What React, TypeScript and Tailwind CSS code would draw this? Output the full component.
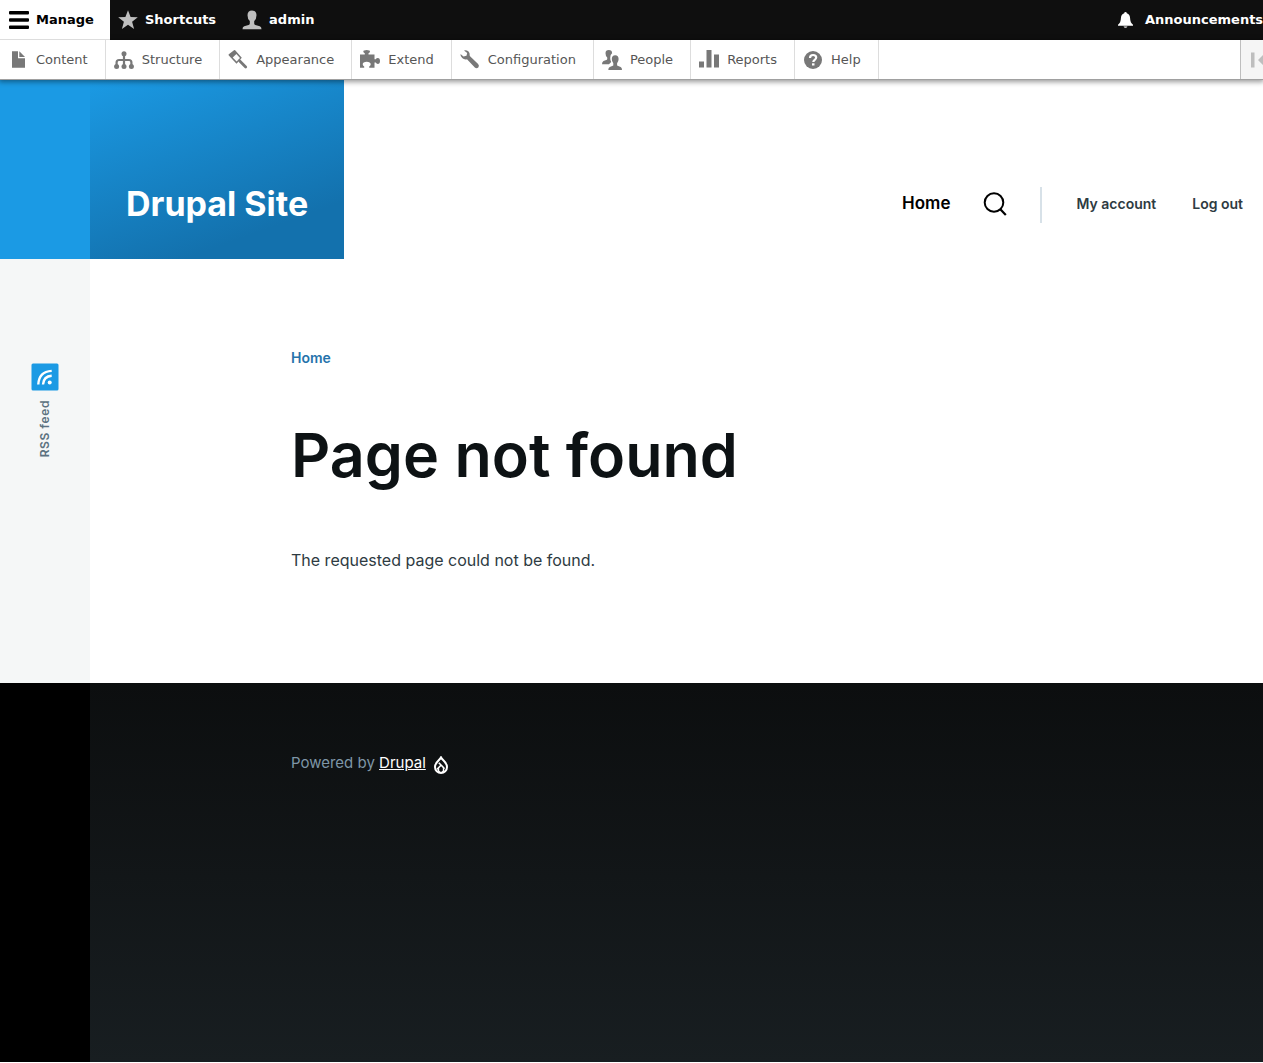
import type { ReactNode } from 'react';

function Icon({ children, className = 'text-[#787878]' }: { children: ReactNode; className?: string }) {
  return (
    <svg viewBox="0 0 20 20" className={`size-5 shrink-0 overflow-visible ${className}`} fill="currentColor" aria-hidden="true">
      {children}
    </svg>
  );
}

const menu = [
  {
    label: 'Content',
    icon: <path d="M4 1.300h6v7h7v9.500H4zM11.300 1.300l5.700 5.600h-5.700z" />,
  },
  {
    label: 'Structure',
    icon: (
      <>
        <circle cx="10" cy="3.800" r="2.500" />
        <circle cx="2.600" cy="16.500" r="2.500" />
        <circle cx="10" cy="16.500" r="2.500" />
        <circle cx="17.400" cy="16.500" r="2.500" />
        <path d="M10 5v11M2.600 16v-3.500q0-2.500 2.500-2.500h9.800q2.500 0 2.500 2.500V16" fill="none" stroke="currentColor" strokeWidth="2.200" />
      </>
    ),
  },
  {
    label: 'Appearance',
    icon: (
      <>
        <path
          fillRule="evenodd"
          d="M6 0.300q.8-.5 1.400.2l6.400 7.200-5.300 6L.800 5.600q-.6-.8 0-1.300zM8.400 4.100L4.700 7.400l3.900 4.200 3.400-3.700z"
        />
        <path d="M11.500 10.800l6.200 6.200" stroke="currentColor" strokeWidth="2.800" strokeLinecap="round" />
      </>
    ),
  },
  {
    label: 'Extend',
    icon: (
      <path d="M0 4.500h4.800V3.200Q3.300 2.800 3.300 1.500 3.300 0 6.700 0T10 1.500q0 1.300-1.500 1.700v1.300h6v4.700h1.300q.5-1.300 2-1.300 2.200 0 2.200 3t-2.200 3q-1.500 0-2-1.300h-1.300v5.100H9.200v-1.300q1.500-.7 1.500-2.200c0-1.400-1.500-2.500-4-2.500s-4 1.100-4 2.500q0 1.500 1.500 2.200v1.300H0z" />
    ),
  },
  {
    label: 'Configuration',
    icon: (
      <path d="M4 .4Q6.200-.3 8.300 1.300q2 1.800 1.500 4.700l8.300 8q1.600 1.800.2 3.500-1.700 1.500-3.500 0L7 9.300Q4.200 10 2.200 8.100.200 6.300.500 4l3 2.600 3-.8.700-2.800z" />
    ),
  },
  {
    label: 'People',
    icon: (
      <>
        <path d="M3.500 3.300Q3.500 0 6.800 0t3.300 3.300q-1.900 1.300-1.900 4.600 0 2.500 1 4L7 14.300H0q0-2.500 1.500-3.200L4.900 9.700q.6-.4.300-2.300-1.700-1.400-1.700-4.100z" />
        <path d="M9.800 9q0-3.800 3.400-3.800T16.600 9q0 2.500-1.500 4.300v2.200l3.500 1.400Q20 17.500 20 20H6.300q0-2.500 1.500-3.100l3.500-1.400v-2.200Q9.800 11.500 9.800 9z" />
      </>
    ),
  },
  {
    label: 'Reports',
    icon: <path d="M0 11.500h5v6H0zM7.500 0h5v17.500h-5zM15 4.500h5v13h-5z" />,
  },
  {
    label: 'Help',
    icon: (
      <>
        <circle cx="10" cy="10" r="9" />
        <path d="M7 8q0-3 3.100-3t3.100 2.600c0 2.200-2.900 2.300-2.900 4.400" fill="none" stroke="white" strokeWidth="2.200" />
        <path d="M9 13.300h2.500v2.200H9z" fill="white" />
      </>
    ),
  },
];

export default function App() {
  return (
    <div className="overflow-x-hidden bg-white font-['Inter',sans-serif] text-[#0d1214]">
      <div className="relative z-10 font-['DejaVu_Sans',sans-serif] text-[13px] leading-5">
        <nav aria-label="Administration" className="flex h-10 bg-[#0f0f0f] font-bold text-white">
          <button type="button" className="flex h-10 w-[110px] shrink-0 items-center gap-[7px] border-b border-[#ddd] bg-white pl-[9px] text-black">
            <Icon className="text-black">
              <path d="M1 1h18q1 0 1 1v1.500q0 1-1 1H1q-1 0-1-1V2q0-1 1-1zM1 8.300h18q1 0 1 1v1.500q0 1-1 1H1q-1 0-1-1V9.300q0-1 1-1zM1 15.600h18q1 0 1 1v1.500q0 1-1 1H1q-1 0-1-1v-1.500q0-1 1-1z" />
            </Icon>
            Manage
          </button>
          <a href="#shortcuts" className="flex items-center gap-[7px] pr-[18px] pl-2">
            <Icon className="text-[#bebebe]">
              <path d="M10 .2l2.600 6.700 7.200.3-5.700 4.500 2 7.200L10 14.800l-6.100 4.100 2-7.200L.2 7.200l7.200-.3z" />
            </Icon>
            Shortcuts
          </a>
          <a href="#admin" className="flex items-center gap-[7px] px-2">
            <Icon className="text-[#bebebe]">
              <path d="M5.500 5.300Q5.500.600 10 .600t4.500 4.700q0 3.700-2.300 5.700v2.500q0 1.100 1.200 1.500l4.400 1.300q1.700.6 1.700 2.900H.500q0-2.300 1.700-2.900L6.600 15q1.200-.4 1.200-1.500V11Q5.500 9 5.500 5.300z" />
            </Icon>
            admin
          </a>
          <a href="#announcements" className="ml-auto flex w-[147px] shrink-0 items-center gap-[9px] whitespace-nowrap">
            <Icon className="text-white">
              <path d="M9.500 2q1.200 0 1.300 1.300 3.200 1 3.300 5 .1 4.500 2.900 6.500v1H2v-1q2.800-2 2.900-6.500.1-4 3.300-5Q8.300 2 9.500 2zM7.500 16.500h4q-.6 1.300-2 1.300t-2-1.300z" />
            </Icon>
            Announcements
          </a>
        </nav>
        <div className="flex h-10 border-b border-[#a0a0a0] bg-white text-[#565656] shadow-[0_1px_5px_1px_rgba(0,0,0,0.4)]">
          <ul className="flex">
            {menu.map(({ label, icon }) => (
              <li key={label} className="border-r border-[#ddd]">
                <a href={`#${label.toLowerCase()}`} className="flex h-full items-center gap-2 pr-[17px] pl-2">
                  <Icon>{icon}</Icon>
                  {label}
                </a>
              </li>
            ))}
          </ul>
          <button type="button" aria-label="Vertical orientation" className="ml-auto flex w-[23px] items-center overflow-hidden border-l border-[#bebebe] bg-[#f5f5f5] pl-[10px]">
            <Icon className="text-[#bebebe]">
              <path d="M0 2.500h3.500v15H0zM7 10l6-6v12z" />
            </Icon>
          </button>
        </div>
      </div>

      <div className="flex">
        <aside className="flex w-[90px] shrink-0 flex-col bg-[#f5f7f7]">
          <div className="h-[179px] bg-[#1b9ae4]" />
          <a href="#rss" className="mt-[104px] flex flex-col items-center gap-[9px] text-xs font-semibold text-[#5c7280]">
            <svg viewBox="0 0 28 28" className="size-7" aria-hidden="true">
              <rect width="27" height="27" x=".5" y=".5" rx="1.500" fill="#1b9ae4" />
              <g fill="none" stroke="white" strokeWidth="2.400">
                <path d="M7.300 21.500q.6-12.800 13.400-13.600M12 21.500q.5-8.300 8.700-8.800" />
              </g>
              <circle cx="18.700" cy="19.600" r="2" fill="white" />
            </svg>
            <span className="rotate-180 tracking-wider [writing-mode:vertical-rl]">RSS feed</span>
          </a>
        </aside>
        <div className="min-w-0 flex-1">
          <header className="flex h-[179px] items-end justify-between">
            <a
              href="#home"
              className="flex h-full items-end bg-[linear-gradient(160deg,#1b9ae4_0%,#1371ad_78.66%)] px-9 pb-[35px] text-[34px] leading-10 font-bold whitespace-nowrap text-white"
            >
              Drupal Site
            </a>
            <nav aria-label="Main" className="mb-9 flex h-9 items-center pr-5 whitespace-nowrap">
              <a href="#home" className="pb-0.5 text-[17px] font-semibold text-black">Home</a>
              <button type="button" aria-label="Search" className="ml-[33px] pb-0.5">
                <svg viewBox="0 0 24 24" className="size-6" fill="none" stroke="black" strokeWidth="2" aria-hidden="true">
                  <circle cx="11" cy="10.500" r="9.300" />
                  <path d="M17.300 17.200l5.500 5.800" strokeWidth="2.200" />
                </svg>
              </button>
              <div className="ml-[33px] flex h-9 items-center gap-9 border-l-2 border-[#d7e1e8] pb-0.5 pl-[34px] text-sm font-semibold text-[#2e3b42]">
                <a href="#account">My account</a>
                <a href="#logout">Log out</a>
              </div>
            </nav>
          </header>
          <main className="h-[424px] pt-[90px] pl-[201px]">
            <a href="#home" className="block text-sm leading-[18px] font-semibold text-[#2573ab]">Home</a>
            <h1 className="mt-[52px] text-[61px] leading-[72px] font-semibold">Page not found</h1>
            <p className="mt-[51px] text-base leading-9 text-[#2e3b42]">The requested page could not be found.</p>
          </main>
        </div>
      </div>

      <footer className="flex h-[379px]">
        <div className="w-[90px] shrink-0 bg-black" />
        <div className="flex-1 bg-linear-to-b from-[#0c0e0f] to-[#181e21] pt-[69px] pl-[201px]">
          <div className="flex items-center text-[15px] leading-5 text-[#7e96a7]">
            <span>
              Powered by <a href="#drupal" className="text-white underline">Drupal</a>
            </span>
            <svg viewBox="0 0 14 18" className="mt-1 ml-2 h-[18px] w-[14px]" fill="none" stroke="white" aria-hidden="true">
              <path d="M7 1.500C6 3.800 1 6.200 1 11a6 6 0 0 0 12 0C13 6.200 8 3.800 7 1.500z" strokeWidth="2" />
              <path d="M4.800 6.800l5.400 5.500M7 9.300l-4 4M7.500 9.500l3 3.300" strokeWidth="1.600" />
              <path d="M4.700 12.300q-1 2.600 1 4h2.600q2-1.400 1-4" strokeWidth="1.300" />
            </svg>
          </div>
        </div>
      </footer>
    </div>
  );
}
